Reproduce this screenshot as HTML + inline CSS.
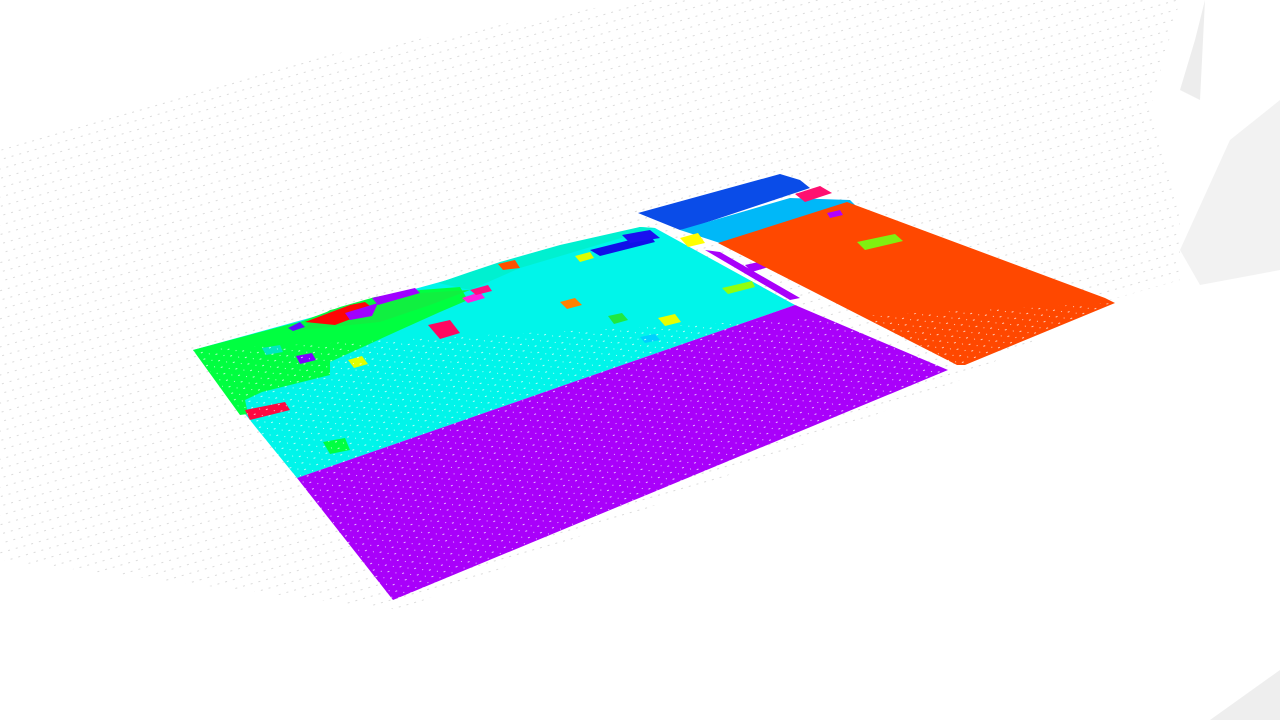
<!DOCTYPE html>
<html><head><style>
html,body{margin:0;padding:0;background:#fff;width:1280px;height:720px;overflow:hidden}
</style></head><body>
<svg width="1280" height="720" viewBox="0 0 1280 720" xmlns="http://www.w3.org/2000/svg">
<defs>
<pattern id="dots" width="8" height="9" patternUnits="userSpaceOnUse" patternTransform="rotate(-16)">
<rect x="0" y="0" width="2" height="1" fill="#cfcfcf"/>
</pattern>
<pattern id="sp" width="13" height="7" patternUnits="userSpaceOnUse" patternTransform="rotate(-22)">
<rect x="2" y="3" width="2" height="1" fill="#fff" opacity="0.8"/>
<rect x="9" y="0" width="1" height="1" fill="#fff" opacity="0.8"/>
</pattern>
</defs>
<polygon points="0,150 300,60 640,0 1180,0 1150,110 1180,200 1180,280 1110,300 960,380 400,610 0,560" fill="url(#dots)" opacity="0.75"/>
<polygon points="1180,90 1195,40 1205,0 1200,100" fill="#dcdcdc" opacity="0.5"/>
<polygon points="1180,250 1230,140 1280,100 1280,270 1200,285" fill="#dadada" opacity="0.35"/>
<polygon points="1210,720 1280,670 1280,720" fill="#e2e2e2" opacity="0.6"/>
<!-- cyan -->
<polygon points="193,350 640,227 655,228 795,305 297,478" fill="#00f5ea"/>
<polygon points="438,283 470,272 500,262 560,245 640,227 655,228 520,268 470,290" fill="#00f0d0"/>
<!-- green -->
<polygon points="193,350 287,325 300,322 340,307 375,297 420,290 460,287 468,300 440,312 400,330 330,362 330,375 262,392 245,400 248,414 240,415" fill="#00ff40"/>
<polygon points="300,330 330,310 380,300 420,293 470,290 430,305 380,322" fill="#10f040"/>
<polygon points="288,328 300,322 305,327 293,331" fill="#6010ff"/>
<polygon points="305,322 350,305 365,302 375,310 335,325" fill="#ff0505"/>
<polygon points="345,313 378,303 372,316 350,320" fill="#a000ff"/>
<polygon points="372,298 415,288 420,293 378,305" fill="#a000ff"/>
<polygon points="245,410 285,402 290,410 250,420" fill="#ff0840"/>
<polygon points="428,325 450,320 460,333 440,339" fill="#ff0860"/>
<polygon points="296,356 312,353 316,360 300,364" fill="#8000ff"/>
<polygon points="348,360 362,356 368,364 354,368" fill="#e0ff00"/>
<polygon points="323,442 345,438 350,450 330,454" fill="#00ff40"/>
<polygon points="262,348 280,345 283,352 266,355" fill="#00e8c0"/>
<polygon points="462,298 480,292 485,298 468,303" fill="#ff20e0"/>
<polygon points="470,290 488,285 492,291 476,295" fill="#ff1080"/>
<polygon points="498,264 515,260 520,268 503,270" fill="#ff5000"/>
<polygon points="560,302 575,298 582,305 567,309" fill="#ff8000"/>
<polygon points="608,316 622,313 628,320 614,324" fill="#20e840"/>
<polygon points="658,318 675,314 681,322 665,326" fill="#e8ff00"/>
<polygon points="640,337 655,334 660,340 645,343" fill="#00d0ff"/>
<polygon points="575,256 590,252 594,258 580,262" fill="#e0ff00"/>
<polygon points="590,250 650,235 655,242 600,256" fill="#1010e8"/>
<polygon points="622,235 650,230 660,238 630,243" fill="#1a10f0"/>
<polygon points="722,288 752,281 755,287 728,294" fill="#90ff10"/>
<polygon points="333,520 378,508 385,518 340,533" fill="#1a10e8"/>
<!-- purple -->
<polygon points="297,478 795,305 948,370 393,600" fill="#a900fa"/>
<polygon points="705,250 720,252 800,298 790,300" fill="#a900fa"/>
<polygon points="745,265 790,255 785,262 752,272" fill="#a900fa"/>
<!-- blue strip -->
<polygon points="638,213 780,174 800,180 810,188 690,228 680,230" fill="#0a4ce8"/>
<polygon points="680,230 790,198 850,200 855,205 728,245 720,243" fill="#00b8f8"/>
<polygon points="795,194 820,186 832,193 805,202" fill="#ff1070"/>
<polygon points="680,238 698,233 705,243 688,247" fill="#ffff00"/>
<!-- orange -->
<polygon points="718,243 847,202 1105,298 1115,303 965,365 957,365" fill="#ff4800"/>
<polygon points="827,213 840,210 843,215 830,218" fill="#b000ff"/>
<polygon points="857,242 895,234 903,241 865,250" fill="#80f010"/>
<polygon points="193,350 1115,303 965,365 393,600" fill="url(#sp)" opacity="0.9"/>
</svg>
</body></html>
